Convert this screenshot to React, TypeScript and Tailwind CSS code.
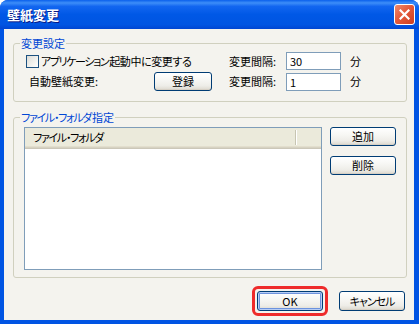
import type { ReactNode } from 'react'

function XPButton({
  children,
  className = '',
  isDefault = false,
}: {
  children: ReactNode
  className?: string
  isDefault?: boolean
}) {
  return (
    <button
      className={`flex items-center justify-center rounded-[3px] border border-[#003C74] bg-[linear-gradient(180deg,#FFFFFF_0%,#F7F7F4_40%,#EEEDE8_75%,#DCD8CE_100%)] text-[11px] leading-none text-black ${
        isDefault
          ? 'shadow-[inset_0_0_0_1px_#B7CDF5,inset_0_0_0_2px_#6D93DE]'
          : 'shadow-[inset_0_-1px_0_#D6D0C5]'
      } ${className}`}
    >
      {children}
    </button>
  )
}

function CloseButton() {
  return (
    <div className="w-[21px] h-[21px] rounded-[3px] border border-white bg-[linear-gradient(135deg,#F08A6C_0%,#E45A3B_45%,#CC3D20_100%)] flex items-center justify-center">
      <svg width="11" height="11" viewBox="0 0 11 11">
        <path d="M1.5 1.5 L9.5 9.5 M9.5 1.5 L1.5 9.5" stroke="#FFFFFF" strokeWidth="2.2" strokeLinecap="square" />
      </svg>
    </div>
  )
}

function NumberBox({ value }: { value: string }) {
  return (
    <input
      readOnly
      defaultValue={value}
      className="w-[55px] h-[18px] border border-[#7F9DB9] bg-white pl-[3px] text-[11px] text-black outline-none"
    />
  )
}

export default function App() {
  return (
    <div className="w-[419px] h-[324px] flex flex-col bg-[#0054E3] rounded-t-[8px] overflow-hidden font-['Noto_Sans_CJK_JP','Noto_Sans',sans-serif] [font-feature-settings:'palt']">
      {/* Title bar */}
      <div className="h-[29px] shrink-0 flex items-center justify-between pl-[7px] pr-[4px] bg-[linear-gradient(180deg,#0A60EC_0%,#3D8EF8_10%,#1266F0_22%,#0058E6_50%,#0055E2_85%,#0046D2_100%)]">
        <span className="text-[13px] font-bold text-white leading-none [text-shadow:1px_1px_0_#0A1883]">
          壁紙変更
        </span>
        <CloseButton />
      </div>

      {/* Body */}
      <div className="flex-1 flex flex-col ml-[4px] mr-[5px] mb-[4px] bg-[#F4F3EE] pl-[9px] pr-[7px] pt-[7px] text-[11px] text-black">
        {/* 変更設定 */}
        <fieldset className="border border-[#D0D0BF] rounded-[3px] pb-[10px]">
          <legend className="ml-[6px] px-[1px] text-[11px] leading-[14px] text-[#0046D5]">変更設定</legend>
          <div className="pt-[2px]">
            <div className="flex items-center h-[18px]">
              <div className="w-[215px] flex items-center pl-[12px]">
                <span className="w-[13px] h-[13px] border border-[#1C5180] bg-[linear-gradient(135deg,#DCDCD7_0%,#F6F6F3_70%,#FFFFFF_100%)]" />
                <span className="ml-[2px] leading-none whitespace-nowrap">
                  <span className="tracking-[-1.4px]">アプリケーション</span>
                  <span className="ml-[1px] tracking-[-0.4px]">起動中に変更する</span>
                </span>
              </div>
              <span className="w-[57px] leading-none">変更間隔:</span>
              <NumberBox value="30" />
              <span className="ml-[9px] leading-none">分</span>
            </div>
            <div className="flex items-center h-[19px] mt-[2px]">
              <div className="w-[215px] flex items-center pl-[15px]">
                <span className="w-[125px] leading-none">自動壁紙変更:</span>
                <XPButton className="w-[58px] h-[19px]">登録</XPButton>
              </div>
              <span className="w-[57px] leading-none">変更間隔:</span>
              <NumberBox value="1" />
              <span className="ml-[9px] leading-none">分</span>
            </div>
          </div>
        </fieldset>

        {/* ファイル・フォルダ指定 */}
        <fieldset className="mt-[8px] border border-[#D0D0BF] rounded-[3px] pb-[7px]">
          <legend className="ml-[6px] px-[1px] text-[11px] leading-[14px] text-[#0046D5]">
            <span className="tracking-[-1.3px]">ファイル・フォルダ</span>
            <span className="ml-[1px]">指定</span>
          </legend>
          <div className="flex pt-[3px] pl-[10px]">
            <div className="w-[298px] h-[143px] border border-[#7F9DB9] bg-white flex flex-col">
              <div className="h-[21px] flex items-center bg-[#EBEADB] shadow-[inset_0_-1px_0_#CBC7B8,inset_0_-2px_0_#D6D2C2,inset_0_-3px_0_#E2DECD]">
                <div className="w-[270px] pl-[8px] leading-none pb-[2px] tracking-[-1.3px]">ファイル・フォルダ</div>
                <div className="w-[2px] h-[15px] mb-[2px] border-l border-[#C7C5B2] border-r border-r-white" />
              </div>
            </div>
            <div className="ml-[8px] flex flex-col gap-[10px]">
              <XPButton className="w-[66px] h-[19px]">追加</XPButton>
              <XPButton className="w-[66px] h-[19px]">削除</XPButton>
            </div>
          </div>
        </fieldset>

        {/* Footer */}
        <div className="mt-[8px] flex items-center justify-end pr-[2px]">
          <div className="rounded-[6px] border-[3px] border-[#EE2B2B] p-[2px]">
            <XPButton isDefault className="w-[66px] h-[20px]">OK</XPButton>
          </div>
          <XPButton className="ml-[11px] w-[66px] h-[20px] tracking-[-1px]">キャンセル</XPButton>
        </div>
      </div>
    </div>
  )
}
